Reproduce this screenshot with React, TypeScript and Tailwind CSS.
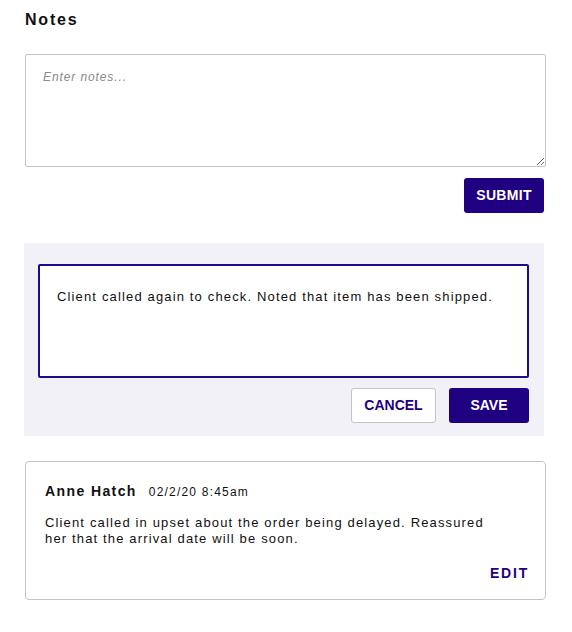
import React from "react";

export default function App() {
  const font = { fontFamily: '"Liberation Sans", Arial, sans-serif' };
  return (
    <div className="w-[572px] h-[632px] bg-white text-[#111] pl-[25px]" style={font}>
      <div className="pt-[10px] text-[16px] leading-[20px] font-bold tracking-[1.8px]">Notes</div>
      <div className="mt-[24px] w-[521px]">
        <textarea
          className="block w-[521px] h-[113px] border border-[#c4c4c4] rounded-[2px] px-[17px] py-[14px] text-[12px] leading-[16px] tracking-[0.9px] placeholder:italic placeholder:text-[#8a8a8a] outline-none resize-y"
          placeholder="Enter notes..."
          style={font}
        />
        <div className="flex justify-end mt-[11px] pr-[2px]">
          <button className="w-[80px] h-[35px] rounded-[3px] bg-[#1f0080] text-white text-[14px] font-bold tracking-[0.3px]">
            SUBMIT
          </button>
        </div>
      </div>
      <div className="mt-[30px] ml-[-1px] w-[520px] bg-[#f2f1f7] pl-[14px] pr-[15px] pt-[21px] pb-[13px]">
        <div className="h-[114px] border-2 border-[#24088a] rounded-[2px] bg-white px-[17px] pt-[23px] text-[13px] leading-[16px] tracking-[1.15px]">
          Client called again to check. Noted that item has been shipped.
        </div>
        <div className="flex justify-end gap-[13px] mt-[10px]">
          <button className="w-[85px] h-[35px] rounded-[3px] bg-white border border-[#c4c4c4] text-[#1f0080] text-[14px] font-bold">
            CANCEL
          </button>
          <button className="w-[80px] h-[35px] rounded-[3px] bg-[#1f0080] text-white text-[14px] font-bold">
            SAVE
          </button>
        </div>
      </div>
      <div className="mt-[25px] w-[521px] h-[139px] border border-[#c4c4c4] rounded-[4px] pl-[19px] pr-[16px] pt-[19px]">
        <div className="flex items-baseline">
          <span className="text-[14px] font-bold tracking-[1.4px]">Anne Hatch</span>
          <span className="ml-[12px] text-[12px] tracking-[1.2px]">02/2/20 8:45am</span>
        </div>
        <div className="mt-[13px] w-[460px] text-[13px] leading-[16px] tracking-[1.15px]">
          Client called in upset about the order being delayed. Reassured her that the arrival date will be soon.
        </div>
        <div className="flex justify-end mt-[16px]">
          <span className="text-[14px] font-bold tracking-[1.8px] text-[#1f0080]">EDIT</span>
        </div>
      </div>
    </div>
  );
}
